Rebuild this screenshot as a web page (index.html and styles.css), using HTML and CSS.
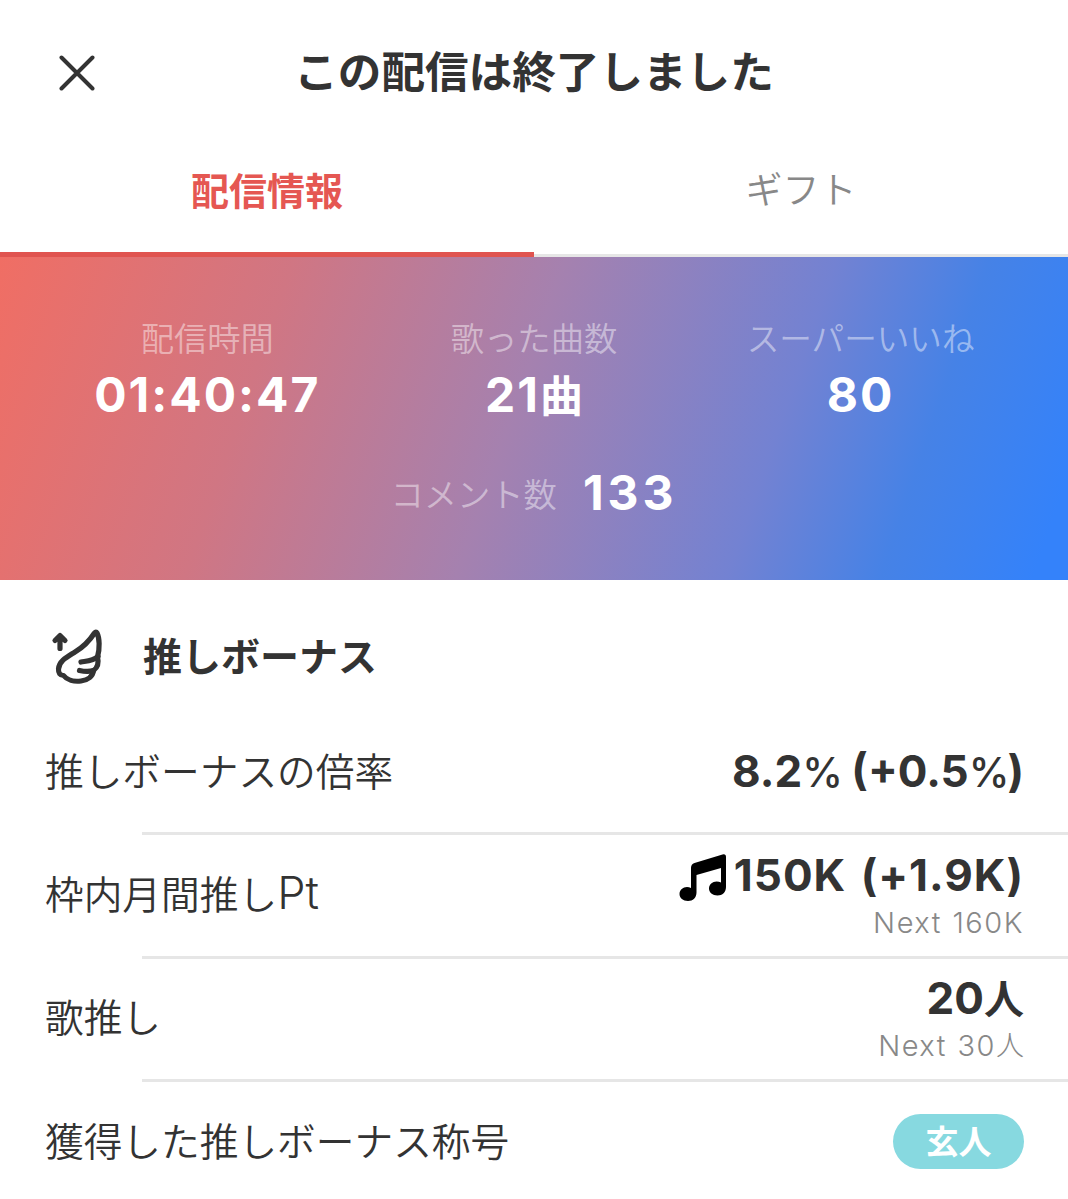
FILE: index.html
```html
<!DOCTYPE html>
<html lang="ja">
<head>
    <meta charset="UTF-8">
    <meta name="viewport" content="width=device-width, initial-scale=1.0">
    <title>配信情報</title>
    <link rel="stylesheet" href="styles.css">
</head>
<body>
    <header class="header">
        <svg class="close" viewBox="0 0 36 36">
            <path d="M2.5 2.5L33.5 33.5M33.5 2.5L2.5 33.5"/>
        </svg>
        <h1 class="title">この配信は終了しました</h1>
    </header>

    <nav class="tabs">
        <div class="tab active">配信情報</div>
        <div class="tab">ギフト</div>
    </nav>

    <section class="summary">
        <div class="stats">
            <div class="stat">
                <div class="stat-label">配信時間</div>
                <div class="stat-value">01:40:47</div>
            </div>
            <div class="stat">
                <div class="stat-label">歌った曲数</div>
                <div class="stat-value">21<span class="stat-unit">曲</span></div>
            </div>
            <div class="stat">
                <div class="stat-label like">スーパーいいね</div>
                <div class="stat-value">80</div>
            </div>
        </div>
        <div class="comments">
            <span class="stat-label">コメント数</span>
            <span class="stat-value">133</span>
        </div>
    </section>

    <section class="bonus">
        <div class="bonus-header">
            <svg class="wing" viewBox="0 0 75 75">
                <path d="M20 28.500V16M15 20.500L20 15.500L25 20.500"/>
                <path d="M54.500 13C50 20 45 26 35 32C27 37 19 41 18.500 49C18.300 53 20 55.500 23.500 55.500C27 60 34 62 41 61C48 60 53 56 53.500 50.500C57 48 59 43 57.500 37C60 28 59.500 18 57 13Q56 11 54.500 13Z"/>
                <path d="M58 36.500C53 41 47 41 41 42M53.500 50.500C49 52 44 51.500 39.500 50.500"/>
            </svg>
            <h2 class="bonus-title">推しボーナス</h2>
        </div>

        <div class="row">
            <div class="row-label">推しボーナスの倍率</div>
            <div class="row-value">8.2<span class="percent">%</span> (+0.5<span class="percent">%</span>)</div>
        </div>
        <div class="row">
            <div class="row-label">枠内月間推し<span class="pt">Pt</span></div>
            <div class="row-data">
                <div class="row-value points">
                    <svg class="note" viewBox="0 0 48 48">
                        <path d="M12 14Q12 10 15.500 9L43.500 .5Q47 -.3 47 3V33C47 38 43.500 41.500 38.500 41.500C33.500 41.500 30 38.500 30 34.500C30 30.500 33.500 27.500 37.500 27.500Q40 27.500 42 28.500V14L17.500 21V38.500C17.500 43.500 14 47 9 47C4 47 .5 44 .5 40C.5 36 4 33 8 33Q10 33 12 34Z"/>
                    </svg>
                    <span>150K (+1.9K)</span>
                </div>
                <div class="next">Next 160K</div>
            </div>
        </div>
        <div class="row">
            <div class="row-label">歌推し</div>
            <div class="row-data">
                <div class="row-value">20<span class="row-unit">人</span></div>
                <div class="next">Next 30<span class="next-unit">人</span></div>
            </div>
        </div>
        <div class="row">
            <div class="row-label">獲得した推しボーナス称号</div>
            <div class="badge">玄人</div>
        </div>
    </section>
</body>
</html>
```

FILE: styles.css
```css
* {
    box-sizing: border-box;
}

body {
    margin: 0;
    height: 1199px;
    overflow: hidden;
    background: #fff;
    color: #333;
    font-family: Inter, "Noto Sans CJK JP", sans-serif;
}

.header {
    display: grid;
    grid-template-columns: 95px 1fr 95px;
    align-items: center;
    height: 145px;
}

.close {
    width: 36px;
    height: 36px;
    margin-left: 59px;
    fill: none;
    stroke: #333;
    stroke-width: 4;
    stroke-linecap: round;
}

.title {
    margin: 0;
    font-size: 43.6px;
    line-height: 60px;
    text-align: center;
}

.tabs {
    display: flex;
    height: 112px;
}

.tab {
    flex: 1;
    padding-top: 16px;
    border-bottom: 3px solid #e6e6e6;
    color: #888;
    font-size: 37px;
    font-weight: 350;
    line-height: 60px;
    text-align: center;
}

.tab.active {
    border-bottom: 5px solid #e05450;
    color: #e55752;
    font-size: 38px;
    font-weight: bold;
}

.summary {
    height: 323px;
    padding: 58px 44px 0;
    background: linear-gradient(109deg, #f06e64 0%, #d07683 25%, #a581af 48%, #7382d2 71%, #4682e6 84%, #3482fa 97%);
    color: #fff;
}

.stats {
    display: grid;
    grid-template-columns: repeat(3, 1fr);
    text-align: center;
}

.stat-label {
    color: rgba(255, 255, 255, 0.45);
    font-size: 33.3px;
    font-weight: 350;
    line-height: 48px;
}

.stat-label.like {
    font-size: 32.6px;
}

.stat-value {
    font-size: 48px;
    font-weight: bold;
    line-height: 64px;
    letter-spacing: 2px;
}

.stat-unit {
    font-size: 43px;
    line-height: 1;
    letter-spacing: 0;
}

.comments {
    display: flex;
    justify-content: center;
    align-items: center;
    gap: 26px;
    margin-top: 34px;
}

.comments .stat-label {
    padding-top: 4px;
}

.comments .stat-value {
    letter-spacing: 4px;
}

.bonus-header {
    display: flex;
    align-items: center;
    height: 130px;
    padding: 24px 0 0 40px;
}

.wing {
    width: 75px;
    height: 75px;
    fill: none;
    stroke: #333;
    stroke-width: 5.2;
    stroke-linecap: round;
    stroke-linejoin: round;
}

.bonus-title {
    margin: 0 0 0 28px;
    font-size: 39px;
    line-height: 60px;
}

.row {
    position: relative;
    display: flex;
    justify-content: space-between;
    align-items: center;
    height: 123.3px;
    padding: 0 44px 0 45px;
}

/* divider starts inset and runs to the right edge */
.row:not(:last-child)::after {
    content: "";
    position: absolute;
    left: 142px;
    right: 0;
    bottom: -2px;
    height: 3px;
    background: #e6e6e6;
}

.row-label {
    font-size: 38.7px;
    font-weight: 350;
    line-height: 60px;
}

.pt {
    font-size: 45px;
    line-height: 1;
}

.row-data {
    text-align: right;
}

.row-value {
    font-size: 44px;
    font-weight: bold;
    line-height: 56px;
}

.row-unit {
    font-size: 40px;
    line-height: 1;
}

.percent {
    font-size: 41px;
    font-weight: 500;
    letter-spacing: -2px;
}

.points {
    display: flex;
    justify-content: flex-end;
    gap: 7px;
    letter-spacing: 1px;
    word-spacing: 3px;
}

.note {
    width: 48px;
    height: 48px;
    margin-top: 7px;
    fill: #000;
}

.next {
    color: #888;
    font-size: 29px;
    font-weight: 300;
    line-height: 40px;
    letter-spacing: 1.5px;
    word-spacing: 1px;
}

.next-unit {
    font-size: 28px;
    letter-spacing: 0;
}

.badge {
    width: 131px;
    height: 55px;
    border-radius: 28px;
    background: #87d9e0;
    color: #fff;
    font-size: 33px;
    font-weight: bold;
    line-height: 57px;
    text-align: center;
}
```
